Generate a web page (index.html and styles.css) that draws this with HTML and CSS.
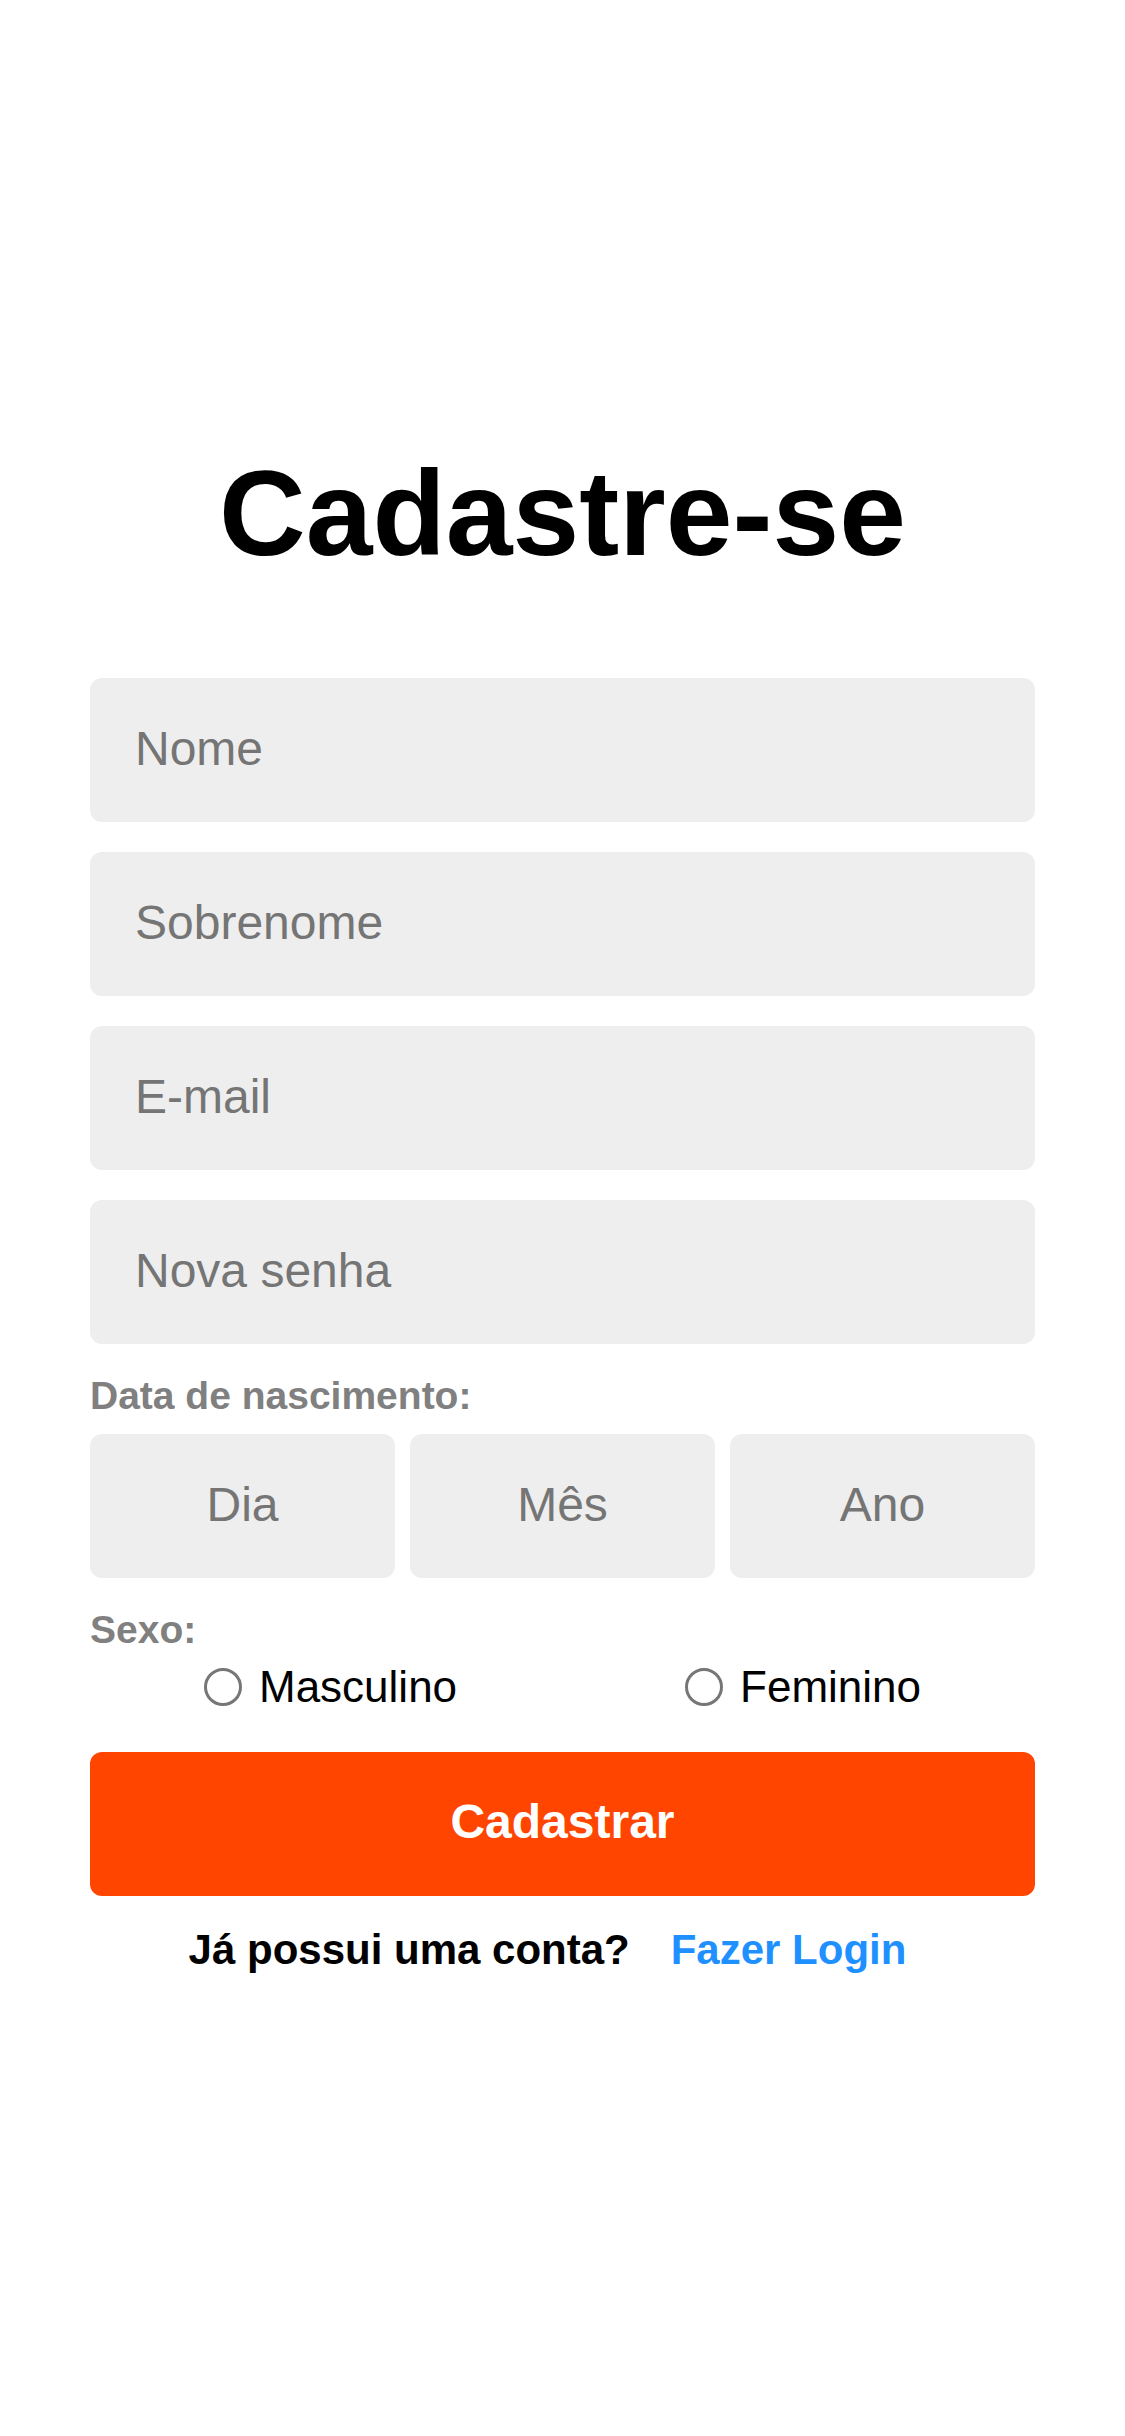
FILE: index.html
```html
<!DOCTYPE html>
<html lang="pt-BR">
<head>
<meta charset="utf-8">
<title>Cadastre-se</title>
<link rel="stylesheet" href="styles.css">
</head>
<body>
<main class="page">
  <h1 class="title">Cadastre-se</h1>
  <form class="form">
    <input class="field" type="text" placeholder="Nome">
    <input class="field" type="text" placeholder="Sobrenome">
    <input class="field" type="email" placeholder="E-mail">
    <input class="field" type="password" placeholder="Nova senha">
    <div class="label label-date">Data de nascimento:</div>
    <div class="date-row">
      <input class="field field-date" type="text" placeholder="Dia">
      <input class="field field-date" type="text" placeholder="Mês">
      <input class="field field-date" type="text" placeholder="Ano">
    </div>
    <div class="label label-sex">Sexo:</div>
    <div class="radio-row">
      <label class="radio-opt"><input class="radio" type="radio" name="sexo"><span>Masculino</span></label>
      <label class="radio-opt"><input class="radio" type="radio" name="sexo"><span>Feminino</span></label>
    </div>
    <button class="submit" type="button">Cadastrar</button>
    <p class="login-line"><span>Já possui uma conta?</span><a class="login-link" href="#">Fazer Login</a></p>
  </form>
</main>
</body>
</html>
```
FILE: styles.css
```css
html, body {
  margin: 0;
  padding: 0;
  background: #ffffff;
}

body {
  font-family: "Liberation Sans", Arial, sans-serif;
  color: #000000;
}

.page {
  padding: 446px 90px 0;
}

.title {
  margin: 0 0 98px;
  font-size: 120px;
  font-weight: 700;
  line-height: 134px;
  text-align: center;
  color: #000000;
}

.form {
  display: flex;
  flex-direction: column;
}

.field {
  box-sizing: border-box;
  display: block;
  width: 100%;
  height: 144px;
  margin: 0 0 30px;
  padding: 0 45px 4px;
  border: none;
  border-radius: 12px;
  background: #eeeeee;
  font-family: "Liberation Sans", Arial, sans-serif;
  font-size: 48px;
  color: #333333;
  outline: none;
}

.field::placeholder {
  color: #757575;
  opacity: 1;
}

.label {
  font-size: 39px;
  font-weight: 700;
  line-height: 44px;
  color: #808080;
}

.label-date {
  margin: 0 0 16px;
}

.date-row {
  display: flex;
  gap: 15px;
}

.field-date {
  flex: 1 1 0;
  min-width: 0;
  margin: 0;
  padding: 0 0 4px;
  text-align: center;
}

.label-sex {
  margin: 30px 0 10px;
}

.radio-row {
  display: flex;
  justify-content: space-around;
  align-items: center;
}

.radio-opt {
  display: flex;
  align-items: center;
  gap: 17px;
  font-size: 44px;
  line-height: 50px;
  color: #000000;
}

.radio {
  -webkit-appearance: none;
  appearance: none;
  box-sizing: border-box;
  width: 38px;
  height: 38px;
  margin: 0;
  border: 3px solid #767676;
  border-radius: 50%;
  background: #ffffff;
}

.submit {
  display: flex;
  align-items: center;
  justify-content: center;
  box-sizing: border-box;
  width: 100%;
  height: 144px;
  margin: 40px 0 0;
  padding: 0 0 6px;
  border: none;
  border-radius: 12px;
  background: #ff4500;
  color: #ffffff;
  font-family: "Liberation Sans", Arial, sans-serif;
  font-size: 48px;
  font-weight: 700;
}

.login-line {
  display: flex;
  justify-content: center;
  margin: 30px 0 0;
  font-size: 42px;
  font-weight: 700;
  line-height: normal;
  color: #000000;
}

.login-link {
  margin: 0 30px 0 41px;
  color: #1e90ff;
  text-decoration: none;
}
```
